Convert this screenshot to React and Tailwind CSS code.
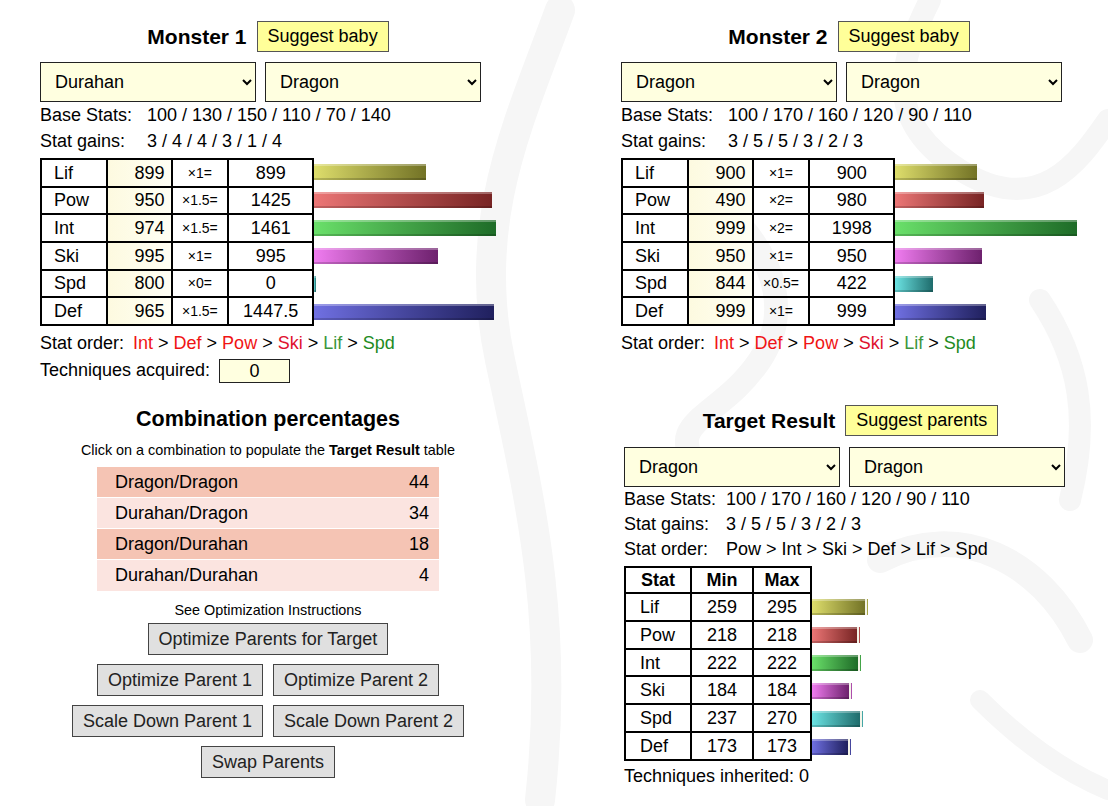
import React from "react";

const BAR = {
  Lif: "bg-gradient-to-r from-[#dede6c] to-[#737326]",
  Pow: "bg-gradient-to-r from-[#ec7676] to-[#782424]",
  Int: "bg-gradient-to-r from-[#6ae06a] to-[#1e6c28]",
  Ski: "bg-gradient-to-r from-[#f07cf0] to-[#6e216e]",
  Spd: "bg-gradient-to-r from-[#6ce4e4] to-[#1e6c6c]",
  Def: "bg-gradient-to-r from-[#7070e2] to-[#20205e]",
};

const monsters = [
  {
    title: "Monster 1",
    sel: ["Durahan", "Dragon"],
    base: "100 / 130 / 150 / 110 / 70 / 140",
    gains: "3 / 4 / 4 / 3 / 1 / 4",
    rows: [
      ["Lif", 899, "×1=", "899", 899],
      ["Pow", 950, "×1.5=", "1425", 1425],
      ["Int", 974, "×1.5=", "1461", 1461],
      ["Ski", 995, "×1=", "995", 995],
      ["Spd", 800, "×0=", "0", 0],
      ["Def", 965, "×1.5=", "1447.5", 1447.5],
    ],
    techniques: true,
  },
  {
    title: "Monster 2",
    sel: ["Dragon", "Dragon"],
    base: "100 / 170 / 160 / 120 / 90 / 110",
    gains: "3 / 5 / 5 / 3 / 2 / 3",
    rows: [
      ["Lif", 900, "×1=", "900", 900],
      ["Pow", 490, "×2=", "980", 980],
      ["Int", 999, "×2=", "1998", 1998],
      ["Ski", 950, "×1=", "950", 950],
      ["Spd", 844, "×0.5=", "422", 422],
      ["Def", 999, "×1=", "999", 999],
    ],
    techniques: false,
  },
];

const order = [
  ["Int", "text-[#f01414]"],
  ["Def", "text-[#f01414]"],
  ["Pow", "text-[#f01414]"],
  ["Ski", "text-[#e0102e]"],
  ["Lif", "text-[#3c963c]"],
  ["Spd", "text-[#228b22]"],
];

const combos = [
  ["Dragon/Dragon", 44],
  ["Durahan/Dragon", 34],
  ["Dragon/Durahan", 18],
  ["Durahan/Durahan", 4],
];

const target = [
  ["Lif", 259, 295, 53],
  ["Pow", 218, 218, 45],
  ["Int", 222, 222, 46],
  ["Ski", 184, 184, 37],
  ["Spd", 237, 270, 48],
  ["Def", 173, 173, 36],
];

function Select({ value }) {
  return (
    <select
      defaultValue={value}
      className="w-[216px] h-[40px] border border-[#222] bg-[#ffffe0] pl-[10px] pr-[6px] text-[18px]"
    >
      <option>{value}</option>
    </select>
  );
}

function Header({ title, button }) {
  return (
    <div className="flex justify-center items-center gap-[10px] h-[31px]">
      <h2 className="text-[21px] font-bold">{title}</h2>
      <button className="h-[31px] px-[10px] bg-[#ffff99] border border-[#555] text-[18px]">
        {button}
      </button>
    </div>
  );
}

function Bar({ stat, width }) {
  return (
    <div
      className={`h-[16px] ${BAR[stat]} shadow-[inset_0_2px_0_rgba(255,255,255,0.3),inset_0_-2px_0_rgba(0,0,0,0.18)]`}
      style={{ width }}
    />
  );
}

function MonsterPanel({ m }) {
  const max = Math.max(...m.rows.map((r) => r[4]));
  return (
    <div>
      <Header title={m.title} button="Suggest baby" />
      <div className="flex gap-[9px] mt-[10px]">
        <Select value={m.sel[0]} />
        <Select value={m.sel[1]} />
      </div>
      <div className="grid grid-cols-[107px_auto] leading-[26px] text-[18px]">
        <span>Base Stats:</span>
        <span>{m.base}</span>
        <span>Stat gains:</span>
        <span>{m.gains}</span>
      </div>
      <div className="flex mt-[4px]">
        <table className="border-collapse border-2 border-black text-[18px] leading-[22px]">
          <tbody>
            {m.rows.map((r) => (
              <tr key={r[0]} className="h-[27px]">
                <td className="border-2 border-black w-[66px] pl-[12px] py-0">{r[0]}</td>
                <td className="border-2 border-black w-[65px] pr-[6px] py-0 text-right bg-gradient-to-r from-[#fdfae0] to-[#fffff4]">
                  {r[1]}
                </td>
                <td className="border-2 border-black w-[57px] py-0 text-center text-[14px]">{r[2]}</td>
                <td className="border-2 border-black w-[85px] py-0 text-center">{r[3]}</td>
              </tr>
            ))}
          </tbody>
        </table>
        <div className="flex flex-col">
          {m.rows.map((r) => (
            <div key={r[0]} className="h-[28px] flex items-center">
              <Bar stat={r[0]} width={Math.max(2, Math.round((r[4] / max) * 182))} />
            </div>
          ))}
        </div>
      </div>
      <div className="mt-[4px] leading-[26px] text-[18px]">
        Stat order:
        <span className="ml-[9px]">
          {order.map(([s, c], i) => (
            <React.Fragment key={s}>
              <span className={c}>{s}</span>
              {i < order.length - 1 && " > "}
            </React.Fragment>
          ))}
        </span>
      </div>
      {m.techniques && (
        <div className="flex items-center h-[29px] text-[18px]">
          Techniques acquired:
          <span className="ml-[9px] w-[71px] h-[24px] border border-[#222] bg-[#ffffe0] leading-[22px] text-center">
            0
          </span>
        </div>
      )}
    </div>
  );
}

function GrayButton({ children }) {
  return (
    <button className="h-[32px] px-[10px] bg-[#e0e0e0] border border-[#444] text-[#222]">
      {children}
    </button>
  );
}

function Combinations() {
  return (
    <div className="mt-[21px] flex flex-col items-center">
      <h2 className="text-[21.5px] leading-[26px] font-bold">Combination percentages</h2>
      <p className="mt-[9px] text-[14.4px] leading-[18px]">
        Click on a combination to populate the <b>Target Result</b> table
      </p>
      <div className="mt-[8px] w-[342px] text-[18px]">
        {combos.map(([name, pct], i) => (
          <div
            key={name}
            className={`h-[31px] flex items-center justify-between pl-[18px] pr-[10px] ${
              i % 2 === 0 ? "bg-[#f5c4b4]" : "bg-[#fbe4e0]"
            } ${i < combos.length - 1 ? "border-b border-white" : ""}`}
          >
            <span>{name}</span>
            <span>{pct}</span>
          </div>
        ))}
      </div>
      <p className="mt-[10px] text-[14.4px] leading-[18px]">See Optimization Instructions</p>
      <div className="mt-[4px] flex flex-col items-center gap-[9px] text-[18px]">
        <GrayButton>Optimize Parents for Target</GrayButton>
        <div className="flex gap-[10px]">
          <GrayButton>Optimize Parent 1</GrayButton>
          <GrayButton>Optimize Parent 2</GrayButton>
        </div>
        <div className="flex gap-[10px]">
          <GrayButton>Scale Down Parent 1</GrayButton>
          <GrayButton>Scale Down Parent 2</GrayButton>
        </div>
        <GrayButton>Swap Parents</GrayButton>
      </div>
    </div>
  );
}

function TargetResult() {
  return (
    <div className="mt-[49px] pl-[3px]">
      <Header title="Target Result" button="Suggest parents" />
      <div className="flex gap-[9px] mt-[11px]">
        <Select value="Dragon" />
        <Select value="Dragon" />
      </div>
      <div className="grid grid-cols-[102px_auto] leading-[25px] text-[18px]">
        <span>Base Stats:</span>
        <span>100 / 170 / 160 / 120 / 90 / 110</span>
        <span>Stat gains:</span>
        <span>3 / 5 / 5 / 3 / 2 / 3</span>
        <span>Stat order:</span>
        <span>Pow &gt; Int &gt; Ski &gt; Def &gt; Lif &gt; Spd</span>
      </div>
      <div className="flex mt-[4px]">
        <table className="border-collapse border-2 border-black text-[18px] leading-[22px]">
          <thead>
            <tr className="h-[26px]">
              <th className="border-2 border-black w-[66px] py-0">Stat</th>
              <th className="border-2 border-black w-[62px] py-0">Min</th>
              <th className="border-2 border-black w-[58px] py-0">Max</th>
            </tr>
          </thead>
          <tbody>
            {target.map((r) => (
              <tr key={r[0]} className="h-[27px]">
                <td className="border-2 border-black pl-[14px] py-0">{r[0]}</td>
                <td className="border-2 border-black py-0 text-center">{r[1]}</td>
                <td className="border-2 border-black py-0 text-center">{r[2]}</td>
              </tr>
            ))}
          </tbody>
        </table>
        <div className="flex flex-col pt-[27px]">
          {target.map((r) => (
            <div key={r[0]} className="h-[28px] flex items-center">
              <Bar stat={r[0]} width={r[3]} />
              <div className="h-[16px] w-[2px] bg-[#f4f4e8]" />
              <div className={`h-[16px] w-[1px] ${BAR[r[0]]}`} />
            </div>
          ))}
        </div>
      </div>
      <p className="mt-[3px] leading-[24px] text-[18px]">Techniques inherited: 0</p>
    </div>
  );
}

function Watermark() {
  return (
    <svg className="absolute inset-0 pointer-events-none" width="1108" height="806" viewBox="0 0 1108 806">
      <g fill="none" stroke="#f6f6f6" strokeLinecap="round">
        <path d="M560 10 C 520 120, 470 220, 500 360 S 560 620, 540 800" strokeWidth="30" />
        <path d="M930 0 C 900 60, 880 120, 960 170 S 1080 160, 1108 120" strokeWidth="22" />
        <path d="M700 190 C 760 230, 800 300, 760 360 S 660 420, 700 470" strokeWidth="24" />
        <path d="M880 560 C 960 520, 1040 560, 1080 640" strokeWidth="26" />
        <path d="M980 700 C 1020 740, 1060 770, 1108 790" strokeWidth="20" />
        <path d="M1040 300 C 1080 360, 1090 420, 1070 500" strokeWidth="22" />
      </g>
    </svg>
  );
}

export default function App() {
  return (
    <div className="relative min-h-screen bg-white overflow-hidden text-black font-['Liberation_Sans',Arial,sans-serif]">
      <Watermark />
      <div className="relative flex gap-[125px] pl-[40px] pt-[21px]">
        <div className="w-[456px]">
          <MonsterPanel m={monsters[0]} />
          <Combinations />
        </div>
        <div className="w-[456px]">
          <MonsterPanel m={monsters[1]} />
          <TargetResult />
        </div>
      </div>
    </div>
  );
}
